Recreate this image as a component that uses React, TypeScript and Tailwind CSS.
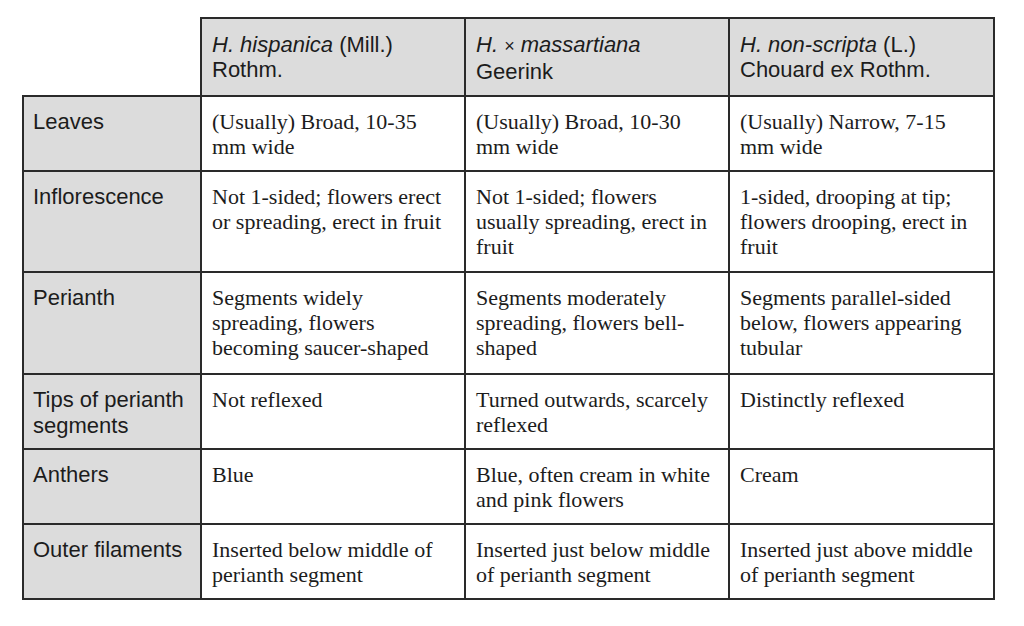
const sans = "font-['Liberation_Sans',Arial,sans-serif] text-[22px]";
const serif = "font-['Liberation_Serif','Times_New_Roman',serif] text-[22px] leading-[25px]";
const cell = "border-2 border-[#2a2a2a] align-top pr-[12px] pt-[12px]";

interface Row {
  label: string;
  h: string;
  cols: string[];
}

const rows: Row[] = [
  {
    label: "Leaves",
    h: "h-[75px]",
    cols: ["(Usually) Broad, 10-35 mm wide", "(Usually) Broad, 10-30 mm wide", "(Usually) Narrow, 7-15 mm wide"],
  },
  {
    label: "Inflorescence",
    h: "h-[101px]",
    cols: [
      "Not 1-sided; flowers erect or spreading, erect in fruit",
      "Not 1-sided; flowers usually spreading, erect in fruit",
      "1-sided, drooping at tip; flowers drooping, erect in fruit",
    ],
  },
  {
    label: "Perianth",
    h: "h-[102px]",
    cols: [
      "Segments widely spreading, flowers becoming saucer-shaped",
      "Segments moderately spreading, flowers bell-shaped",
      "Segments parallel-sided below, flowers appearing tubular",
    ],
  },
  {
    label: "Tips of perianth segments",
    h: "h-[75px]",
    cols: ["Not reflexed", "Turned outwards, scarcely reflexed", "Distinctly reflexed"],
  },
  {
    label: "Anthers",
    h: "h-[75px]",
    cols: ["Blue", "Blue, often cream in white and pink flowers", "Cream"],
  },
  {
    label: "Outer filaments",
    h: "h-[75px]",
    cols: [
      "Inserted below middle of perianth segment",
      "Inserted just below middle of perianth segment",
      "Inserted just above middle of perianth segment",
    ],
  },
];

export default function App() {
  return (
    <div className="w-[1024px] h-[626px] bg-white text-[#1c1c1c] pl-[22px] pt-[17px]">
      <table className="border-collapse table-fixed w-[971px]">
        <colgroup>
          <col className="w-[178px]" />
          <col className="w-[264px]" />
          <col className="w-[264px]" />
          <col className="w-[265px]" />
        </colgroup>
        <thead>
          <tr className="h-[78px]">
            <th className="p-0" />
            <th className={`${cell} ${sans} leading-[25px] pl-[10px] pt-[13px] text-left font-normal bg-[#dcdcdc]`}>
              <i>H. hispanica</i> (Mill.)
              <br />
              Rothm.
            </th>
            <th className={`${cell} ${sans} leading-[25px] pl-[10px] pt-[13px] text-left font-normal bg-[#dcdcdc]`}>
              <i>H.</i> <span className="text-[18px]">×</span> <i>massartiana</i>
              <br />
              Geerink
            </th>
            <th className={`${cell} ${sans} leading-[25px] pl-[10px] pt-[13px] text-left font-normal bg-[#dcdcdc]`}>
              <i>H. non-scripta</i> (L.)
              <br />
              Chouard ex Rothm.
            </th>
          </tr>
        </thead>
        <tbody>
          {rows.map((r) => (
            <tr key={r.label} className={r.h}>
              <td className={`${cell} ${sans} leading-[26px] pl-[9px] pt-[10px] bg-[#dcdcdc]`}>{r.label}</td>
              {r.cols.map((c, i) => (
                <td key={i} className={`${cell} ${serif} pl-[10px]`}>
                  {c}
                </td>
              ))}
            </tr>
          ))}
        </tbody>
      </table>
    </div>
  );
}
